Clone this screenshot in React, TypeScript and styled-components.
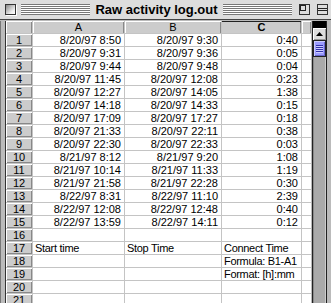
import styled, { createGlobalStyle } from "styled-components";

const Global = createGlobalStyle`
  html, body { margin: 0; padding: 0; background: #fff; }
  body { font-family: "Liberation Sans", Arial, sans-serif; }
`;

const Window = styled.div`
  width: 331px;
  height: 303px;
  overflow: hidden;
  display: flex;
  flex-direction: column;
  background: #bbbbbb;
`;

const TitleBar = styled.div`
  height: 20px;
  flex: none;
  display: flex;
  align-items: center;
  padding: 0 3px 0 5px;
  gap: 5px;
  background: #dddddd;
  border-bottom: 1px solid #444;
  box-sizing: border-box;
`;

const Box = styled.div`
  width: 11px;
  height: 11px;
  flex: none;
  box-sizing: border-box;
  border: 1px solid #333;
  background: linear-gradient(135deg, #888 0%, #eee 70%, #fff 100%);
  box-shadow: 1px 1px 0 #fff;
`;

const Stripes = styled.div`
  flex: 1;
  height: 11px;
  background: repeating-linear-gradient(
    to bottom,
    #777 0px,
    #777 1px,
    #fff 1px,
    #fff 2px
  );
`;

const Title = styled.div`
  font-size: 13px;
  font-weight: bold;
  color: #000;
  white-space: nowrap;
`;

const WinBtn = styled.div`
  width: 11px;
  height: 11px;
  flex: none;
  box-sizing: border-box;
  border: 1px solid #333;
  background: #ddd;
  margin-left: 2px;
`;

const Body = styled.div`
  flex: 1;
  display: flex;
  padding-top: 1px;
  min-height: 0;
`;

const LeftFrame = styled.div`
  width: 6px;
  flex: none;
  box-sizing: border-box;
  border-left: 1px solid #777;
  border-right: 1px solid #333;
  background: #bbb;
`;

const Sheet = styled.div`
  flex: none;
  display: grid;
  grid-template-columns: 26px 91px 96px 79px 9px;
  grid-auto-rows: 12px;
  gap: 1px;
  background: #c4c4c4;
  align-content: start;
  width: 305px;
`;

const HeadCell = styled.div<{ $sel?: boolean }>`
  background: #cccccc;
  font-size: 11px;
  line-height: 12px;
  text-align: center;
  color: #000;
  font-weight: ${(p) => (p.$sel ? "bold" : "normal")};
  box-shadow: ${(p) =>
    p.$sel
      ? "inset 0 1px 0 #222, inset -1px 0 0 #888"
      : "inset 1px 1px 0 #fff, inset -1px 0 0 #888"};
`;

const RowHead = styled.div`
  background: #cccccc;
  font-size: 11px;
  line-height: 12px;
  text-align: center;
  color: #000;
  box-shadow: inset 1px 1px 0 #fff, inset -1px -1px 0 #888;
`;

const Cell = styled.div<{ $left?: boolean }>`
  background: #fff;
  font-size: 11px;
  line-height: 12px;
  white-space: nowrap;
  overflow: hidden;
  color: #000;
  text-align: ${(p) => (p.$left ? "left" : "right")};
  letter-spacing: ${(p) => (p.$left ? "-0.3px" : "0")};
  padding: 0 3px 0 2px;
`;

const ScrollBar = styled.div`
  width: 15px;
  flex: none;
  display: flex;
  flex-direction: column;
  background: #aaaaaa;
  box-sizing: border-box;
  border-left: 1px solid #222;
  border-right: 1px solid #222;
  margin-left: 1px;
`;

const SplitBox = styled.div`
  height: 7px;
  background: #000;
`;

const Arrow = styled.div`
  height: 12px;
  display: flex;
  align-items: center;
  justify-content: center;
  background: #ddd;
  border-bottom: 1px solid #222;
  box-shadow: inset 1px 1px 0 #fff, inset -1px -1px 0 #999;
`;

const Thumb = styled.div`
  height: 16px;
  box-sizing: border-box;
  border: 1px solid #222;
  border-top: none;
  background: #9c9cff;
  display: flex;
  align-items: center;
  justify-content: center;
  box-shadow: inset 1px 1px 0 #ccccff, inset -1px -1px 0 #6666cc;
`;

const Grip = styled.div`
  width: 7px;
  height: 8px;
  background: repeating-linear-gradient(
    to bottom,
    #3333aa 0px,
    #3333aa 1px,
    #ccccff 1px,
    #ccccff 2px
  );
`;

const Track = styled.div`
  flex: 1;
  box-shadow: inset 1px 0 0 #888, inset -1px 0 0 #ccc;
`;

const RightFrame = styled.div`
  width: 5px;
  flex: none;
  box-sizing: border-box;
  background: #bbb;
  border-right: 1px solid #555;
`;

type Row = [string, string, string];

const rows: Row[] = [
  ["8/20/97 8:50", "8/20/97 9:30", "0:40"],
  ["8/20/97 9:31", "8/20/97 9:36", "0:05"],
  ["8/20/97 9:44", "8/20/97 9:48", "0:04"],
  ["8/20/97 11:45", "8/20/97 12:08", "0:23"],
  ["8/20/97 12:27", "8/20/97 14:05", "1:38"],
  ["8/20/97 14:18", "8/20/97 14:33", "0:15"],
  ["8/20/97 17:09", "8/20/97 17:27", "0:18"],
  ["8/20/97 21:33", "8/20/97 22:11", "0:38"],
  ["8/20/97 22:30", "8/20/97 22:33", "0:03"],
  ["8/21/97 8:12", "8/21/97 9:20", "1:08"],
  ["8/21/97 10:14", "8/21/97 11:33", "1:19"],
  ["8/21/97 21:58", "8/21/97 22:28", "0:30"],
  ["8/22/97 8:31", "8/22/97 11:10", "2:39"],
  ["8/22/97 12:08", "8/22/97 12:48", "0:40"],
  ["8/22/97 13:59", "8/22/97 14:11", "0:12"],
  ["", "", ""],
  ["Start time", "Stop Time", "Connect Time"],
  ["", "", "Formula: B1-A1"],
  ["", "", "Format: [h]:mm"],
  ["", "", ""],
  ["", "", ""],
];

export default function App() {
  return (
    <>
      <Global />
      <Window>
        <TitleBar>
          <Box />
          <Stripes />
          <Title>Raw activity log.out</Title>
          <Stripes />
          <WinBtn>
            <svg width="9" height="9" viewBox="0 0 9 9" style={{ display: "block" }}>
              <rect x="0.5" y="0.5" width="5" height="5" fill="none" stroke="#222" />
            </svg>
          </WinBtn>
          <WinBtn>
            <svg width="9" height="9" viewBox="0 0 9 9" style={{ display: "block" }}>
              <line x1="0" y1="3.5" x2="9" y2="3.5" stroke="#222" />
              <line x1="0" y1="5.5" x2="9" y2="5.5" stroke="#222" />
            </svg>
          </WinBtn>
        </TitleBar>
        <Body>
          <LeftFrame />
          <Sheet>
            <HeadCell />
            <HeadCell>A</HeadCell>
            <HeadCell>B</HeadCell>
            <HeadCell $sel>C</HeadCell>
            <HeadCell />
            {rows.map((r, i) => {
              const text = i >= 16 && i <= 18;
              return [
                <RowHead key={`h${i}`}>{i + 1}</RowHead>,
                <Cell key={`a${i}`} $left={text}>{r[0]}</Cell>,
                <Cell key={`b${i}`} $left={text}>{r[1]}</Cell>,
                <Cell key={`c${i}`} $left={text}>{r[2]}</Cell>,
                <Cell key={`d${i}`} />,
              ];
            })}
          </Sheet>
          <ScrollBar>
            <SplitBox />
            <Arrow>
              <svg width="7" height="4" viewBox="0 0 7 4">
                <polygon points="3.5,0 7,4 0,4" fill="#000" />
              </svg>
            </Arrow>
            <Thumb>
              <Grip />
            </Thumb>
            <Track />
          </ScrollBar>
          <RightFrame />
        </Body>
      </Window>
    </>
  );
}
